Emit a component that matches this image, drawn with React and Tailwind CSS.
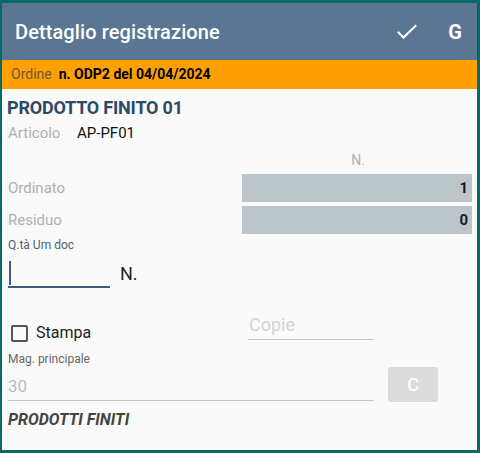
import React from 'react';

const Row = ({ label, value }) => (
  <div className="flex items-center h-[28px]">
    <span className="w-[235px] pl-[1px] text-[15px] leading-[20px] text-[#b0b0b0]">{label}</span>
    <div className="flex-1 h-[28px] bg-[#bcc5ca] flex items-center justify-end pr-[4px] text-[15px] font-bold text-[#1a1a1a]">
      {value}
    </div>
  </div>
);

const App = () => (
  <div className="w-[480px] h-[453px] bg-[#0b6a68] pt-[3px] pl-[2px] pr-[3px] pb-[3px]" style={{ fontFamily: 'Roboto, sans-serif' }}>
    <div className="h-full bg-[#fafafa] flex flex-col">
      <header className="h-[57px] bg-[#5a7692] flex items-center pl-[13px] pr-[15px] shadow-[0_1px_2px_rgba(0,0,0,0.25)]">
        <h1 className="flex-1 text-white text-[20px] font-medium tracking-[0.1px]">Dettaglio registrazione</h1>
        <svg className="w-[24px] h-[24px] mr-[29px]" viewBox="0 0 24 24" fill="none" stroke="white" strokeWidth="2" strokeLinecap="square">
          <path d="M3.5 12.5l5 5L20.5 6" />
        </svg>
        <span className="text-white text-[20px] font-bold">G</span>
      </header>
      <div className="h-[29px] bg-[#ffa000] flex items-center pl-[9px] text-[14px]">
        <span className="text-[#6b5a3a] mr-[7px]">Ordine</span>
        <span className="font-bold text-black">n. ODP2 del 04/04/2024</span>
      </div>
      <div className="px-[5px] pt-[9px]">
        <div className="text-[18px] font-bold text-[#2c4a63] tracking-[-0.2px] leading-[20px]">PRODOTTO FINITO 01</div>
        <div className="flex items-center h-[22px] mt-[4px] text-[15px]">
          <span className="w-[70px] pl-[1px] text-[#b0b0b0]">Articolo</span>
          <span className="text-[#111]">AP-PF01</span>
        </div>
        <div className="flex justify-end h-[20px] mt-[6px] items-center pr-[107px] text-[14px] text-[#b0b0b0]">N.</div>
        <div className="flex flex-col gap-[4px] mt-[4px]">
          <Row label="Ordinato" value="1" />
          <Row label="Residuo" value="0" />
        </div>
        <div className="pl-[1px] mt-[4px] text-[12px] leading-[14px] text-[#4a6276]">Q.tà Um doc</div>
        <div className="flex items-end mt-[4px] pl-[1px]">
          <div className="w-[102px] h-[32px] border-b-2 border-[#3f5b75] flex items-end pb-[1px]">
            <div className="w-[2px] h-[24px] bg-[#3f5b75] ml-[1px]" />
          </div>
          <span className="ml-[10px] mb-[2px] text-[18px] leading-[24px] text-[#222]">N.</span>
        </div>
        <div className="flex items-end mt-[25px]">
          <div className="w-[241px] flex items-center pl-[4px] mb-[-2px]">
            <div className="w-[17px] h-[17px] border-2 border-[#555] rounded-[2px]" />
            <span className="ml-[8px] text-[16px] leading-[18px] text-[#222]">Stampa</span>
          </div>
          <div className="w-[126px] border-b border-[#c4c4c4] pb-[2px] text-[18px] leading-[24px] text-[#d4d4d4] pl-[1px]">Copie</div>
        </div>
        <div className="flex items-end mt-[11px]">
          <div className="w-[366px] ml-[1px]">
            <div className="text-[12px] leading-[14px] mt-[1px] text-[#666]">Mag. principale</div>
            <div className="mt-[8px] border-b border-[#c4c4c4] pb-[2px] text-[17px] leading-[24px] text-[#bdbdbd]">30</div>
          </div>
          <button className="ml-[14px] mb-[-1px] w-[50px] h-[35px] bg-[#dcdcdc] rounded-[3px] text-white text-[18px]">C</button>
        </div>
        <div className="mt-[9px] pl-[1px] text-[16px] leading-[20px] font-bold italic text-[#444]">PRODOTTI FINITI</div>
      </div>
    </div>
  </div>
);

export default App;
